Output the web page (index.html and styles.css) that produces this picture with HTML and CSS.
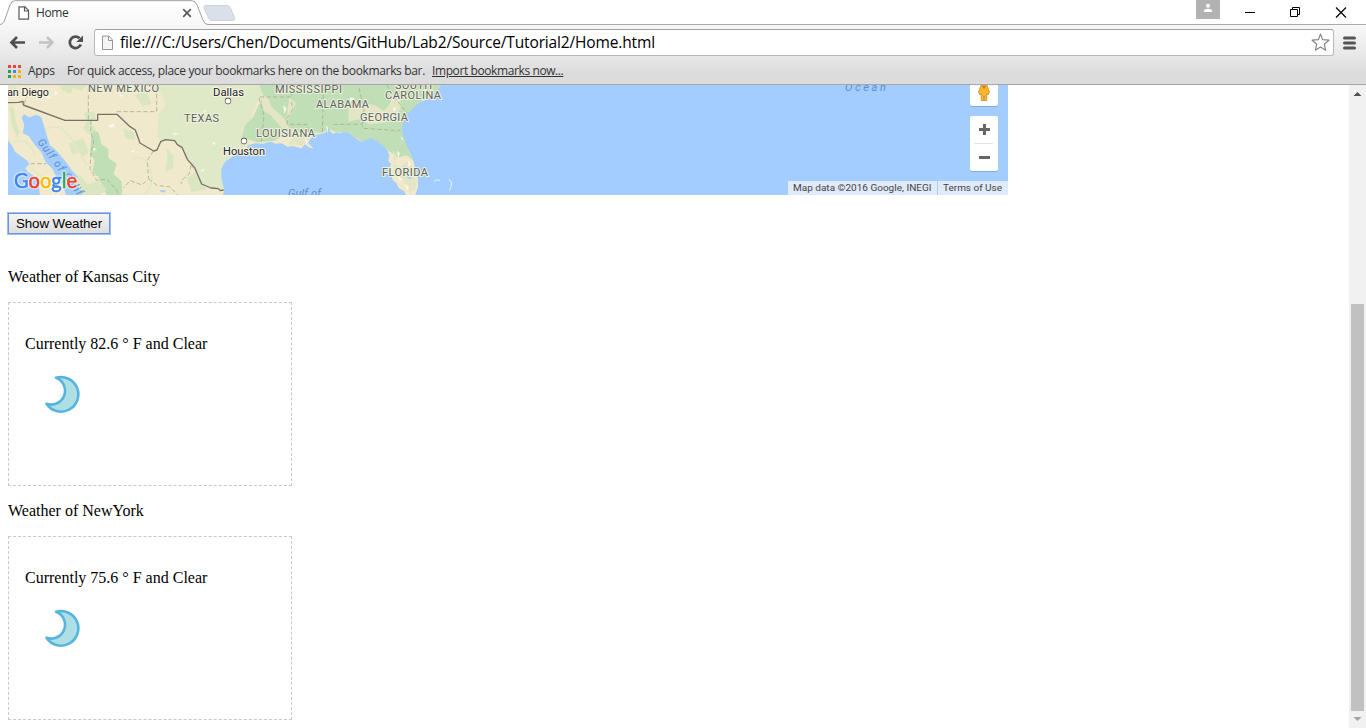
FILE: index.html
```html
<!DOCTYPE html>
<html lang="en">
<head>
<meta charset="utf-8">
<title>Home</title>
<link rel="stylesheet" href="styles.css">
</head>
<body>
<div class="browser">
  <header class="tabstrip">
    <div class="tab">
      <svg class="tab-shape" width="240" height="25" viewBox="0 0 240 25">
        <defs><linearGradient id="tabfill" x2="0" y2="1"><stop stop-color="#fff"/><stop offset="1" stop-color="#f7f7f7"/></linearGradient></defs>
        <path d="M0 24.500C3 24 4 22 5 19L10 5Q11.500 1 15 .7H192Q195.500 1 197 5L203 20Q204.500 24.500 208 24.500V26H0Z" fill="url(#tabfill)"/>
        <path d="M0 24.500C3 24 4 22 5 19L10 5Q11.500 1 15 .7H192Q195.500 1 197 5L203 20Q204.500 24.500 208 24.500H240" fill="none" stroke="#a0a0a0"/>
        <path d="M205.500 5.500H227Q229.500 5.500 230.500 8L234.500 18Q235.500 20.500 233 20.500H212Q209.500 20.500 208.500 18L204 8Q203.500 5.500 205.500 5.500Z" fill="#dae0e9" stroke="#ced2d8"/>
      </svg>
      <div class="tab-content">
        <svg width="12" height="14" viewBox="0 0 12 14"><path d="M1 .8H7L10.500 4.500V13.200H1ZM6.500 1V5H10.500" fill="#fff" stroke="#595959" stroke-width="1.200"/></svg>
        <span class="tab-title">Home</span>
        <svg width="10" height="10" viewBox="0 0 10 10"><path d="M1.200 1.200L8.800 8.800M8.800 1.200L1.200 8.800" stroke="#5a5a5a" stroke-width="1.700"/></svg>
      </div>
    </div>
    <div class="user"><svg width="24" height="19" viewBox="0 0 24 19"><circle cx="12" cy="5.700" r="2" fill="#fff"/><path d="M8 12V10.500Q8.500 8.700 12 8.700T16 10.500V12Z" fill="#fff"/></svg></div>
    <svg class="window-buttons" width="146" height="24" viewBox="0 0 146 24" fill="none" stroke="#000" stroke-width="1">
      <path d="M25 12.500H35"/><path d="M70.500 9.500H77.500V16.500H70.500ZM72.500 9V7.500H79.500V14.500H78"/><path d="M116 7.500L126 17.500M126 7.500L116 17.500" stroke-width="1.150"/>
    </svg>
  </header>
  <div class="toolbar">
    <div class="address-row">
      <svg class="nav-icons" width="94" height="32" viewBox="0 26 94 32">
        <path d="M25 42.500H12M17 37L11.500 42.500L17 48" fill="none" stroke="#505050" stroke-width="2.700"/>
        <path d="M39 42.500H52M47 37L52.500 42.500L47 48" fill="none" stroke="#c3c3c3" stroke-width="2.500"/>
        <path d="M79.600 38.300A5.700 5.700 0 1 0 80.800 44.500" fill="none" stroke="#505050" stroke-width="2.700"/><path d="M83 35.500V42H76.300Z" fill="#505050"/>
      </svg>
      <div class="omnibox">
        <svg width="13" height="16" viewBox="0 0 13 16"><path d="M1.500 1H8L11.500 5V14.500H1.500ZM7.500 1V5.500H11.500" fill="#f5f5f5" stroke="#969696"/></svg>
        <span class="url">file:///C:/Users/Chen/Documents/GitHub/Lab2/Source/Tutorial2/Home.html</span>
        <svg width="19" height="19" viewBox="0 0 19 19"><path d="M9.500 1.100L11.700 6.700L17.900 7.200L13.300 11.300L14.700 17.200L9.500 14L4.300 17.200L5.700 11.300L1.100 7.200L7.300 6.700Z" fill="#fff" stroke="#858585" stroke-width="1.200" stroke-linejoin="round"/></svg>
      </div>
      <svg class="menu" width="13" height="14" viewBox="0 0 13 14"><path d="M1.500 2H11.500M1.500 7H11.500M1.500 12H11.500" stroke="#555" stroke-width="3" stroke-linecap="round"/></svg>
    </div>
    <div class="bookmarks">
      <svg width="13" height="13" viewBox="0 0 13 13"><path d="M0 0h3v3H0zM5 0h3v3H5zM10 0h3v3h-3z" fill="#e8453c"/><path d="M0 5h3v3H0zM0 10h3v3H0z" fill="#2d9c55"/><path d="M5 5h3v3H5z" fill="#4285f4"/><path d="M10 5h3v3h-3zM5 10h3v3H5zM10 10h3v3h-3z" fill="#f4b400"/></svg>
      <span class="apps">Apps</span>
      <span class="hint">For quick access, place your bookmarks here on the bookmarks bar.</span>
      <span class="import">Import bookmarks now...</span>
    </div>
  </div>
  <div class="viewport">
    <main class="page">
      <svg class="map" width="1000" height="110" viewBox="8 85 1000 110">
        <rect x="8" y="85" width="1000" height="110" fill="#a3ccff"/>
        <g transform="translate(0 82) scale(.33333)">
          <path fill="#f0e9cb" d="M24 0H1325L1318 18 1304 26 1298 38 1278 53 1260 60 1242 70 1234 84 1218 94 1210 105 1205 125 1206 150 1211 175 1222 198 1233 220 1240 236 1248 268 1254 295 1254 315 1246 339H1218L1212 328 1196 318 1190 304 1180 296 1170 275 1168 262 1173 245 1165 238 1168 220 1162 205 1154 196 1142 184 1128 172 1112 167 1098 170 1086 179 1074 174 1060 162 1043 151 1030 148 1020 154 1008 151 1000 156 990 148 984 128 978 150 968 155 945 158 930 172 924 182 942 201 926 195 915 187 904 199 880 193 862 194 845 184 826 185 812 179 790 185 765 184 744 190 740 200 720 208 706 218 690 225 675 239 667 250 660 264 664 290 672 325 668 345H265L262 325 245 295 232 282 215 265 200 243 181 220 165 202 150 190 140 160 130 125 124 106 110 98 88 106 72 97 65 106 73 130 68 153 87 163 104 188 124 210 137 240 158 262 172 290 189 310 200 345H120L116 310 108 286 84 270 75 259 88 247 82 236 62 222 46 210 38 194 24 175Z"/>
          <path fill="#dfe9c7" d="M470 9H800L760 80 740 190 706 218 675 239 664 260 664 290 672 325 640 320 605 305 585 258 563 235 546 195 525 175 481 178 472 165 475 95 500 70ZM24 12L45 9 50 24 35 40 24 48Z"/>
          <path fill="#c1dfb7" d="M779 9H1325L1298 38 1260 60 1234 84 1210 105 1206 150 1222 198 1240 236 1220 220 1195 227 1170 210 1154 196 1142 184 1112 167 1086 179 1043 151 1008 151 985 140 965 153 930 150 870 155 820 177 770 181 725 166 735 130 760 104 778 65 790 42ZM275 145L295 150 305 188 325 200 325 228 350 245 341 276 365 298 367 339H320L305 310 295 285 277 270 284 234 270 218Z"/>
          <path fill="#dae6c0" d="M178 10L258 9 246 28 218 17 212 35 185 25ZM250 93L280 88 290 108 272 120 288 144 268 158 251 140 260 118ZM205 184L249 170 267 210 248 226 236 211 218 219ZM221 292L240 280 264 307 300 295 318 323 299 339H247ZM370 140L403 151 405 173 378 170ZM500 198L520 222 520 259 495 270 502 237ZM560 290L585 270 619 322 575 331ZM405 40L438 25 455 66 428 73ZM28 75L40 78 50 130 60 151 52 168 36 132Z"/>
          <path fill="#e4e5c4" d="M782 48L802 42 814 75 852 108 868 138 845 138 812 100 792 87ZM1045 75L1075 58 1100 65 1125 70 1150 87 1167 70 1180 35 1200 42 1202 82 1183 99 1161 121 1128 125 1105 126 1077 112 1046 119ZM866 139L890 142 895 158 919 158 928 177 905 190 863 186 874 170ZM1180 205L1192 225 1183 244 1202 258 1220 238 1238 254 1239 278 1250 295 1247 317 1230 335 1222 310 1207 290 1188 281 1180 260ZM868 46L888 64 873 96 862 116 862 85Z"/>
          <path fill="#a3ccff" d="M480 325H496V331H482ZM1220 281L1230 281 1235 291 1224 289ZM1211 250L1217 257 1214 266Z"/>
          <path fill="none" stroke="#e2e7c4" stroke-width="5" stroke-linecap="round" d="M42 180Q83 163 105 218M90 255L126 287M140 142Q181 117 215 173T261 249M401 229Q435 216 451 261T434 339M488 25Q514 46 496 74T525 116"/>
          <path fill="#f9f8eb" d="M52 36h8l-5 9zM137 38l18 9-12 3zM163 28l9 3-5 12zM326 132l15-8 3 8-14 6zM278 198l12 2-9 8zM391 210l16-9-5 9zM358 36l12 5-10 4zM517 151l19 5-12 4zM609 86l9-3-3 9zM636 183l11-4-4 11zM600 266l12-6-3 11zM850 69l9 9-6 19zM915 169l8 8-5 9zM978 130l6 7-2 18zM1051 46l13 3-15 11zM1178 80l11-5-5 14zM1204 163l8 13-8-5zM1191 206l8 7-4 18zM1225 234l8 14-8 7zM1191 279l18 14-9 4zM1215 306l12 9-6 10z"/>
          <path fill="none" stroke="#a9ac9a" stroke-width="2.500" stroke-dasharray="13 7" d="M73 65L82 38 75 9M265 112V9M350 89H470V9M92 245H139M273 115L272 149 281 178 273 214 270 260 290 295 321 291 350 325 357 339M460 207L441 237 446 290 426 309 391 296 370 318M446 291L472 311 508 314 534 339M573 250L567 277 548 292 543 306M573 250L590 268M779 45H875V9M777 48L792 102 784 178M875 60L878 82 861 110 862 127H921L925 149M970 18L967 155M1000 127H1085L1090 139 1180 145 1187 150 1207 139M1077 18L1092 85 1088 126M1160 9L1185 48 1220 92"/>
          <path fill="none" stroke="#757268" stroke-width="4" stroke-linejoin="round" d="M24 62L56 61 69 58 70 69 195 115H293V97H351L390 134 406 144 420 183 461 207 471 204 482 179 497 173 524 176 532 188 546 196 562 232 584 257 605 306 633 318 655 320 662 326 671 324"/>
          <path d="M1302 298Q1307 291 1321 295M1346 293Q1361 297 1349 325" fill="none" stroke="#e8f4f7" stroke-width="3"/>
        </g>
        <g class="place">
          <text x="7" y="96" textLength="42" lengthAdjust="spacingAndGlyphs">an Diego</text>
          <text x="213" y="96" textLength="31" lengthAdjust="spacingAndGlyphs">Dallas</text>
          <text x="223" y="155" textLength="42" lengthAdjust="spacingAndGlyphs">Houston</text>
          <circle cx="228" cy="101" r="2.600"/><circle cx="244" cy="141" r="2.600"/>
        </g>
        <g class="state">
          <text x="88" y="92" textLength="71">NEW MEXICO</text>
          <text x="184" y="121.500" textLength="35">TEXAS</text>
          <text x="275" y="92.500" textLength="67">MISSISSIPPI</text>
          <text x="316" y="107.500" textLength="53">ALABAMA</text>
          <text x="256" y="136.500" textLength="59">LOUISIANA</text>
          <text x="360" y="120.500" textLength="48">GEORGIA</text>
          <text x="395" y="88.500" textLength="37">SOUTH</text>
          <text x="385" y="98.500" textLength="56">CAROLINA</text>
          <text x="382" y="175.500" textLength="46">FLORIDA</text>
        </g>
        <g class="water">
          <text x="845" y="91" textLength="41">Ocean</text>
          <text x="288" y="196.500" textLength="33">Gulf of</text>
          <text transform="translate(37 142) rotate(53)" textLength="68">Gulf of Calif</text>
        </g>
        <text class="google" x="14" y="187.500" textLength="63" lengthAdjust="spacingAndGlyphs"><tspan fill="#4285f4" stroke="#4285f4">G</tspan><tspan fill="#ea4335" stroke="#ea4335">o</tspan><tspan fill="#fbbc05" stroke="#fbbc05">o</tspan><tspan fill="#4285f4" stroke="#4285f4">g</tspan><tspan fill="#34a853" stroke="#34a853">l</tspan><tspan fill="#ea4335" stroke="#ea4335">e</tspan></text>
        <rect x="970" y="78" width="28" height="29" rx="2" fill="#7eabdb"/><rect x="970" y="77" width="28" height="29" rx="2" fill="#fff"/>
        <path d="M981 85H987L989.500 92 988 95 986.800 93.500V100.500H984.500V96H983.500V100.500H981.200V93.500L980 95 978.500 92Z" fill="#fbb72c" stroke="#c78323" stroke-width=".7"/><path d="M982 86L984 89 986 86Z" fill="#e66b20"/>
        <rect x="970" y="117" width="28" height="55" rx="2" fill="#7eabdb"/><rect x="970" y="116" width="28" height="55" rx="2" fill="#fff"/>
        <path d="M974 143.500H993" stroke="#e3e3e3"/><path d="M979 129.500H990M984.500 124V135M979 157.500H990" stroke="#666" stroke-width="3"/>
        <rect x="788" y="181" width="220" height="14" fill="#dfeafb"/><path d="M937.500 181V195" stroke="#b6cde9"/>
        <g class="legal"><text x="793" y="191" textLength="138.500" lengthAdjust="spacingAndGlyphs">Map data ©2016 Google, INEGI</text><text x="943" y="191" textLength="59" lengthAdjust="spacingAndGlyphs">Terms of Use</text></g>
      </svg>
      <button class="show">Show Weather</button>
      <p class="city first">Weather of Kansas City</p>
      <section class="card">
        <p>Currently 82.6 ° F and Clear</p>
        <svg class="moon" width="50" height="50" viewBox="0 0 50 50"><path d="M15 8.800A17.300 17.300 0 1 1 5.500 34.700A13.600 13.600 0 0 0 15 8.800Z" fill="#addfe4" stroke="#55b4e0" stroke-width="2.600" stroke-linejoin="round"/></svg>
      </section>
      <p class="city">Weather of NewYork</p>
      <section class="card">
        <p>Currently 75.6 ° F and Clear</p>
        <svg class="moon" width="50" height="50" viewBox="0 0 50 50"><path d="M15 8.800A17.300 17.300 0 1 1 5.500 34.700A13.600 13.600 0 0 0 15 8.800Z" fill="#addfe4" stroke="#55b4e0" stroke-width="2.600" stroke-linejoin="round"/></svg>
      </section>
    </main>
    <div class="scrollbar">
      <svg width="17" height="17" viewBox="0 0 17 17"><path d="M4.500 11L8.500 7L12.500 11Z" fill="#505050"/></svg>
      <div class="thumb"></div>
      <svg width="17" height="17" viewBox="0 0 17 17"><path d="M4.500 6L8.500 10L12.500 6Z" fill="#a3a3a3"/></svg>
    </div>
  </div>
</div>
</body>
</html>
```
FILE: styles.css
```css
* { box-sizing: border-box; }
body { margin: 0; background: #fff; color: #000; overflow: hidden; }
svg { display: block; flex: none; }
.browser { width: 1366px; height: 728px; display: flex; flex-direction: column; overflow: hidden; }
.tabstrip { height: 25px; flex: none; display: flex; border-bottom: 1px solid #aaa; font-family: "Open Sans", sans-serif; }
.tab { width: 240px; height: 25px; display: grid; flex: none; }
.tab-shape, .tab-content { grid-area: 1 / 1; }
.tab-content { display: flex; align-items: center; height: 25px; padding-left: 18px; }
.tab-title { width: 146px; margin-left: 6px; margin-right: 0; font-size: 12px; letter-spacing: -.4px; color: #333; }
.user { width: 24px; height: 19px; background: #b2b2b2; margin-left: auto; }
.toolbar { height: 60px; flex: none; background: linear-gradient(#f7f7f7, #e7e7e7 55%, #dcdcdc 80%); border-bottom: 1px solid #a6a6a6; }
.address-row { display: flex; height: 34px; padding-top: 1px; }
.omnibox { width: 1240px; height: 27px; margin-top: 3px; display: flex; align-items: center; gap: 6px; padding: 0 3px 0 6px; background: #fff; border: 1px solid #b8b8b8; border-top-color: #9f9f9f; border-radius: 3px; }
.url { flex: 1; font: 15.5px/22px "Open Sans", sans-serif; letter-spacing: -.15px; white-space: nowrap; padding-bottom: 2px; }
.menu { margin: 10px 0 0 9px; }
.bookmarks { height: 24px; display: flex; align-items: center; padding-left: 8px; font: 12px/18px "Open Sans", sans-serif; letter-spacing: -.34px; white-space: nowrap; color: #333; }
.apps { width: 39px; margin-left: 7px; }
.hint { width: 365px; }
.import { text-decoration: underline; letter-spacing: -.4px; }
.viewport { display: flex; flex: 1; min-height: 0; }
.page { flex: 1; padding-left: 8px; font: 16px/18px "Liberation Serif", serif; }
.show { display: block; width: 102px; height: 21px; margin: 18px 0 0; padding: 0; font: 13.33px/17px "Liberation Sans", sans-serif; letter-spacing: -.1px; background: linear-gradient(#f5f5f5, #dedede); border: 1px solid #6d93d9; box-shadow: 0 0 0 1px #9fc0f5; }
.city { margin: 16px 0; }
.city.first { margin-top: 34px; }
.card { width: 284px; height: 184px; padding: 16px; border: 1px dashed #c8c8c8; }
.card p { margin: 16px 0; }
.moon { margin-left: 16px; }
.state { font: 11px Roboto, sans-serif; fill: #5d6260; stroke: #eef1dc; stroke-width: 2px; paint-order: stroke; }
.place { font: 11px Roboto, sans-serif; fill: #222; stroke: #f7f6e9; stroke-width: 2px; paint-order: stroke; }
.place circle { fill: #fff; stroke: #333; stroke-width: 1.1px; }
.water { font: italic 11px Roboto, sans-serif; fill: #5b8fcf; }
.google { font: 400 20.5px Lato, sans-serif; stroke-width: .6px; filter: drop-shadow(0 0 1px #fff) drop-shadow(0 0 .5px #fff); }
.legal { font: 9.8px Roboto, sans-serif; fill: #444; }
.scrollbar { width: 17px; display: flex; flex-direction: column; background: #f1f1f1; }
.thumb { width: 13px; height: 407px; margin: 202px 2px 0; background: #c1c1c1; }
```
